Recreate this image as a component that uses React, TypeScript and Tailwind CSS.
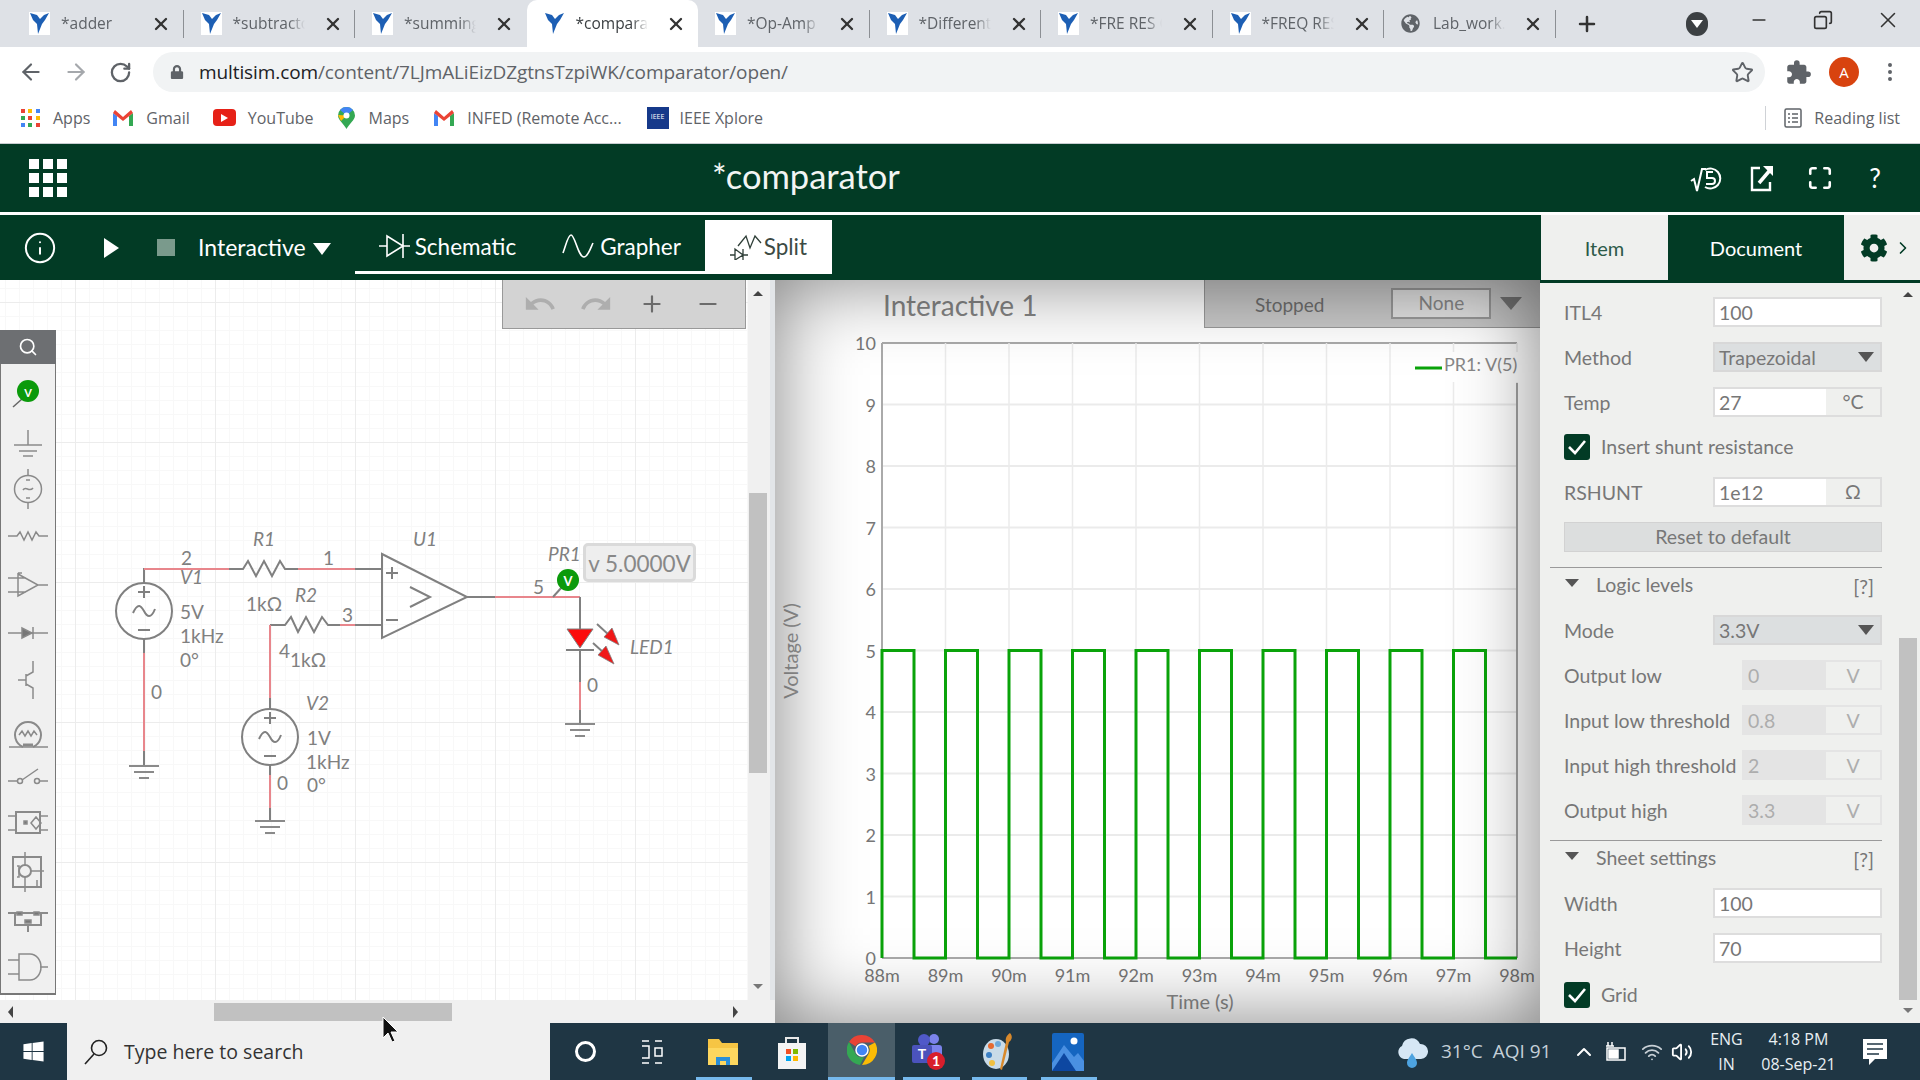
import {
  ArrowLeft,
  ArrowRight,
  ChevronRight,
  ChevronUp,
  Copy,
  EllipsisVertical,
  Info,
  Maximize,
  Minus,
  Plus,
  RotateCw,
  Search,
  Star,
  Volume2,
  Wifi,
  X,
} from 'lucide-react';
import { FaCog, FaGlobeAmericas, FaLock, FaWindows } from 'react-icons/fa';
import { MdExtension, MdRedo, MdUndo } from 'react-icons/md';

const CHROME_FONT = "font-['Open_Sans',sans-serif]";

function NiLogo() {
  return (
    <svg width="21" height="23" viewBox="0 0 21 23" className="shrink-0">
      <rect width="21" height="23" fill="#fff" />
      <path d="M1 1 L8 3 L11 7 L15 3 L20 1 L16 8 L13 12 L9 22 L8 12 L4 8 Z" fill="#1d5fb4" />
    </svg>
  );
}

function Tab({ title, active, globe, sep = true }: { title: string; active?: boolean; globe?: boolean; sep?: boolean }) {
  return (
    <div className={`w-[171.5px] h-[47px] shrink-0 flex items-center pl-[17px] ${active ? 'bg-white rounded-t-[10px]' : ''}`}>
      {globe ? <FaGlobeAmericas size={19} className="text-[#5f6368] shrink-0 mr-[2px]" /> : <NiLogo />}
      <div
        className={`w-[72px] ml-[11px] overflow-hidden whitespace-nowrap text-[15.5px] [mask-image:linear-gradient(90deg,#000_78%,transparent)] ${active ? 'text-[#3c4043]' : 'text-[#5f6368]'}`}
      >
        {title}
      </div>
      <div className="ml-[17px] w-[22px] flex justify-center">
        <X size={20} strokeWidth={2.8} className="text-[#333]" />
      </div>
      <div className={`ml-auto w-px h-[28px] ${sep ? 'bg-[#8c8f94]' : ''}`} />
    </div>
  );
}

function TabStrip() {
  return (
    <div className="h-[47px] bg-[#dee1e6] flex items-center pl-[12px] shrink-0">
      <Tab title="*adder" />
      <Tab title="*subtractor" />
      <Tab title="*summing" sep={false} />
      <Tab title="*comparator" active sep={false} />
      <Tab title="*Op-Amp I" />
      <Tab title="*Differentiator" />
      <Tab title="*FRE RES C" />
      <Tab title="*FREQ RES" />
      <Tab title="Lab_work.pdf" globe />
      <Plus size={24} strokeWidth={2.5} className="ml-[19px] text-[#333]" />
      <div className="ml-[87px] w-[22px] h-[24px] rounded-full bg-[#3c4043] flex items-center justify-center">
        <div className="w-0 h-0 border-x-[6px] border-x-transparent border-t-[8px] border-t-white" />
      </div>
      <Minus size={20} className="ml-[41px] -mt-[8px] text-[#333]" />
      <Copy size={20} className="ml-[44px] -mt-[8px] text-[#333] -scale-x-100" />
      <X size={26} strokeWidth={1.4} className="ml-[42px] -mt-[8px] text-[#333]" />
    </div>
  );
}

function AddressBar() {
  return (
    <div className="h-[47px] bg-white flex items-center shrink-0 pt-[3px]">
      <ArrowLeft size={26} className="ml-[18px] text-[#5f6368]" />
      <ArrowRight size={26} className="ml-[19px] text-[#a5a8ac]" />
      <RotateCw size={23} strokeWidth={2.4} className="ml-[20px] text-[#5f6368]" />
      <div className="ml-[21px] w-[1612px] h-[40px] rounded-full bg-[#f1f3f4] flex items-center pl-[17px] pr-[11px]">
        <FaLock size={14} className="text-[#5f6368]" />
        <span className="ml-[15px] text-[19px] tracking-[-0.1px] text-[#5f6368] whitespace-nowrap">
          <span className="text-[#202124]">multisim.com</span>/content/7LJmALiEizDZgtnsTzpiWK/comparator/open/
        </span>
        <Star size={23} className="ml-auto text-[#5f6368]" />
      </div>
      <MdExtension size={27} className="ml-[20px] text-[#5f6368]" />
      <div className="ml-[17px] w-[30px] h-[30px] rounded-full bg-[#d8430f] text-white text-[15px] flex items-center justify-center">A</div>
      <EllipsisVertical size={24} className="ml-[19px] text-[#5f6368]" />
    </div>
  );
}

function GmailIcon() {
  return (
    <svg width="20" height="16" viewBox="0 0 20 16">
      <path d="M0 3 V16 H4 V6 Z" fill="#4285f4" />
      <path d="M16 6 V16 H20 V3 Z" fill="#34a853" />
      <path d="M0 3 L2 0 L10 7 L18 0 L20 3 L10 11 Z" fill="#ea4335" />
    </svg>
  );
}

function Bookmarks() {
  const dots = ['#ea4335', '#fbbc05', '#4285f4', '#34a853', '#ea4335', '#fbbc05', '#4285f4', '#34a853', '#ea4335'];
  return (
    <div className="h-[50px] bg-white border-b border-[#c8ccd0] flex items-center shrink-0 text-[16px] text-[#5f6368] whitespace-nowrap pb-[2px]">
      <div className="ml-[21px] grid grid-cols-3 gap-[3px] w-[19px]">
        {dots.map((c, i) => (
          <div key={i} className="w-[4px] h-[4px]" style={{ background: c }} />
        ))}
      </div>
      <span className="ml-[13px]">Apps</span>
      <div className="ml-[23px]"><GmailIcon /></div>
      <span className="ml-[13px]">Gmail</span>
      <div className="ml-[23px] w-[23px] h-[17px] rounded-[4px] bg-[#e62117] flex items-center justify-center">
        <div className="w-0 h-0 border-y-[4px] border-y-transparent border-l-[7px] border-l-white" />
      </div>
      <span className="ml-[12px]">YouTube</span>
      <svg width="17" height="22" viewBox="0 0 17 22" className="ml-[24px]">
        <path d="M8.5 0 A8.5 8.5 0 0 1 17 8.5 C17 13 11 17 8.5 22 C6 17 0 13 0 8.5 A8.5 8.5 0 0 1 8.5 0 Z" fill="#34a853" />
        <path d="M2 3 A8.5 8.5 0 0 1 15 3 L8.5 8.5 Z" fill="#4285f4" />
        <path d="M0 8 L8.5 8.5 L3 14 Z" fill="#fbbc05" />
        <circle cx="8.5" cy="8.5" r="3" fill="#fff" />
      </svg>
      <span className="ml-[14px]">Maps</span>
      <div className="ml-[25px]"><GmailIcon /></div>
      <span className="ml-[13px]">INFED (Remote Acc...</span>
      <div className="ml-[25px] w-[22px] h-[22px] bg-[#16398a] text-white text-[7px] flex items-center justify-center">IEEE</div>
      <span className="ml-[11px]">IEEE Xplore</span>
      <div className="ml-auto w-px h-[24px] bg-[#cfd2d6]" />
      <svg width="18" height="20" viewBox="0 0 18 20" className="ml-[18px]" fill="none" stroke="#5f6368" strokeWidth="1.5">
        <rect x="1" y="1" width="16" height="18" rx="1.5" />
        <path d="M4 6 H6 M8 6 H14 M4 10 H6 M8 10 H14 M4 14 H6 M8 14 H14" />
      </svg>
      <span className="ml-[12px] mr-[20px]">Reading list</span>
    </div>
  );
}

function AppHeader() {
  return (
    <div className="h-[68px] bg-[#023b25] flex items-center text-white shrink-0">
      <div className="ml-[29px] grid grid-cols-3 gap-[4px]">
        {Array.from({ length: 9 }).map((_, i) => (
          <div key={i} className="w-[10px] h-[10px] bg-white" />
        ))}
      </div>
      <div className="ml-[645px] -mt-[3px] text-[34.5px] text-[#f2f5f3] leading-none">*comparator</div>
      <svg width="34" height="30" viewBox="0 0 34 30" className="ml-auto" fill="none" stroke="#fff" strokeWidth="2">
        <path d="M1 18 L4 16 L7 28 L12 6 H16" />
        <path d="M15 7 A10 10 0 1 1 15 24" />
        <path d="M23 9 H17 V15 H22 A3 3 0 0 1 22 21 H16" />
      </svg>
      <svg width="24" height="28" viewBox="0 0 24 28" className="ml-[26px]" fill="none" stroke="#fff" strokeWidth="2.4">
        <path d="M10 4 H2 V26 H20 V18" />
        <path d="M9 19 L21 5" strokeWidth="3.5" />
        <path d="M13 2 H23 V12 Z" fill="#fff" stroke="none" />
      </svg>
      <Maximize size={26} strokeWidth={2.4} className="ml-[33px]" />
      <div className="ml-[36px] mr-[39px] text-[26px]">?</div>
    </div>
  );
}

function Toolbar() {
  return (
    <div className="h-[65px] bg-[#023b25] flex text-white shrink-0">
      <div className="flex items-center">
        <Info size={34} strokeWidth={1.4} className="ml-[23px]" />
        <div className="ml-[47px] w-0 h-0 border-y-[10px] border-y-transparent border-l-[15px] border-l-white" />
        <div className="ml-[38px] w-[18px] h-[17px] bg-[#7a9a8c]" />
        <div className="ml-[23px] text-[23px] whitespace-nowrap">Interactive</div>
        <div className="ml-[7px] mt-[3px] w-0 h-0 border-x-[9px] border-x-transparent border-t-[12px] border-t-white" />
      </div>
      <div className="ml-[24px] w-[350px] h-[54px] mt-[5px] border-b-[3px] border-white flex items-center pl-[24px] pt-[3px] text-[22.5px]">
        <svg width="31" height="24" viewBox="0 0 31 24" fill="none" stroke="#fff" strokeWidth="1.6" className="-mt-[3px]">
          <path d="M0 12 H8 M8 2 V22 L24 12 Z M24 0 V24 M24 12 H31" />
        </svg>
        <span className="ml-[5px]">Schematic</span>
        <svg width="32" height="26" viewBox="0 0 32 26" fill="none" stroke="#fff" strokeWidth="1.6" className="ml-[46px] -mt-[3px]">
          <path d="M1 20 C4 12 6 2 9 2 C13 2 16 24 22 24 C26 24 29 14 31 10" />
        </svg>
        <span className="ml-[6px]">Grapher</span>
      </div>
      <div className="w-[127px] h-[54px] mt-[5px] bg-white flex items-center pl-[25px] text-[22.5px] text-[#3c4a44]">
        <svg width="32" height="26" viewBox="0 0 32 26" fill="none" stroke="#2f3f38" strokeWidth="1.3">
          <path d="M0 21 H5 M5 15 V26 L13 21 Z M13 15 V26 M13 21 H18" />
          <path d="M8 12 L16 2 L20 14 L25 2 L31 9" />
        </svg>
        <span className="ml-[2px]">Split</span>
      </div>
      <div className="ml-auto w-[380px] flex">
        <div className="w-[127px] ml-px bg-[#eff0ee] text-[#2c5a48] text-[20px] flex items-center justify-center">Item</div>
        <div className="w-[176px] text-[20px] flex items-center justify-center">Document</div>
        <div className="flex-1 bg-[#eff0ee] text-[#023b25] flex items-center pl-[16px]">
          <FaCog size={28} />
          <ChevronRight size={20} className="ml-[5px]" />
        </div>
      </div>
    </div>
  );
}

function Ground({ x, y }: { x: number; y: number }) {
  return (
    <path
      d={`M${x - 15} ${y} H${x + 15} M${x - 10} ${y + 6} H${x + 10} M${x - 5} ${y + 12} H${x + 5}`}
      stroke="#8a8a8a"
      strokeWidth="2"
      fill="none"
    />
  );
}

function AcSource({ x, y }: { x: number; y: number }) {
  return (
    <g stroke="#808080" strokeWidth="2" fill="none">
      <circle cx={x} cy={y} r="28" />
      <path d={`M${x - 6} ${y - 19} H${x + 6} M${x} ${y - 25} V${y - 13} M${x - 6} ${y + 19} H${x + 6}`} />
      <path d={`M${x - 11} ${y + 2} C${x - 6} ${y - 9} ${x - 3} ${y - 5} ${x} ${y} C${x + 3} ${y + 6} ${x + 7} ${y + 8} ${x + 11} ${y - 2}`} />
    </g>
  );
}

function Label({ x, y, children, italic }: { x: number; y: number; children: string; italic?: boolean }) {
  return (
    <text x={x} y={y - 1} fontSize="19" fill="#808080" fontStyle={italic ? 'italic' : 'normal'} dominantBaseline="central">
      {children}
    </text>
  );
}

function SchematicDrawing() {
  const gray = '#808080';
  const red = '#e8868c';
  return (
    <svg width="748" height="720" viewBox="0 280 748 720" className="block">
      <g fill="none" strokeWidth="2">
        <path d="M144 583 V569 H160" stroke={gray} />
        <path d="M144 569 H229" stroke={red} />
        <path d="M229 569 H243 L248 561 L256 576 L264 561 L272 576 L280 561 L285 569 H298" stroke={gray} />
        <path d="M298 569 H355" stroke={red} />
        <path d="M355 569 H382" stroke={gray} />
        <path d="M270 625 H285 L291 617 L298 632 L306 617 L314 632 L322 617 L328 625 H340" stroke={gray} />
        <path d="M340 625 H355" stroke={red} />
        <path d="M355 625 H382" stroke={gray} />
        <path d="M270 625 V698" stroke={red} />
        <path d="M270 698 V709 M270 765 V775" stroke={gray} />
        <path d="M270 775 V808" stroke={red} />
        <path d="M270 808 V821" stroke={gray} />
        <path d="M144 638 V653" stroke={gray} />
        <path d="M144 653 V751" stroke={red} />
        <path d="M144 751 V766" stroke={gray} />
        <path d="M382 554 L467 597 L382 638 Z" stroke={gray} />
        <path d="M386 573 H398 M392 567 V579 M386 620 H398" stroke={gray} />
        <path d="M410 587 L430 597 L410 607" stroke={gray} />
        <path d="M467 597 H495" stroke={gray} />
        <path d="M495 597 H580" stroke={red} />
        <path d="M580 597 V629 M566 650 H594 M580 650 V682 M580 710 V724" stroke={gray} />
        <path d="M580 682 V710" stroke={red} />
        <path d="M553 597 L562 587" stroke={gray} />
        <path d="M597 624 L610 636 M593 643 L604 653" stroke={gray} />
      </g>
      <Ground x={144} y={766} />
      <Ground x={270} y={821} />
      <Ground x={580} y={724} />
      <AcSource x={144} y={611} />
      <AcSource x={270} y={737} />
      <path d="M567 629 H593 L580 648 Z" fill="#fb0d0d" stroke={gray} strokeWidth="1" />
      <path d="M619 645 L604 637 L612 628 Z M614 664 L598 655 L606 646 Z" fill="#f01818" stroke={gray} strokeWidth="0.8" />
      <circle cx="568" cy="580" r="11" fill="#0b9a0b" />
      <text x="568" y="581" fontSize="13" fontWeight="700" fill="#fff" textAnchor="middle" dominantBaseline="central">V</text>
      <Label x={253} y={539} italic>R1</Label>
      <Label x={181} y={558}>2</Label>
      <Label x={180} y={577} italic>V1</Label>
      <Label x={323} y={558}>1</Label>
      <Label x={246} y={604}>1kΩ</Label>
      <Label x={295} y={595} italic>R2</Label>
      <Label x={342} y={615}>3</Label>
      <Label x={279} y={651}>4</Label>
      <Label x={290} y={660}>1kΩ</Label>
      <Label x={180} y={612}>5V</Label>
      <Label x={180} y={636}>1kHz</Label>
      <Label x={180} y={660}>0°</Label>
      <Label x={151} y={692}>0</Label>
      <Label x={306} y={703} italic>V2</Label>
      <Label x={307} y={738}>1V</Label>
      <Label x={306} y={762}>1kHz</Label>
      <Label x={307} y={785}>0°</Label>
      <Label x={277} y={783}>0</Label>
      <Label x={413} y={539} italic>U1</Label>
      <Label x={533} y={587}>5</Label>
      <Label x={548} y={554} italic>PR1</Label>
      <Label x={630} y={647} italic>LED1</Label>
      <Label x={587} y={685}>0</Label>
    </svg>
  );
}

function Pal({ children, w = 48, h = 44 }: { children: React.ReactNode; w?: number; h?: number }) {
  return (
    <svg width={w} height={h} viewBox={`${-w / 2} ${-h / 2} ${w} ${h}`} fill="none" stroke="#8a8a8a" strokeWidth="1.5">
      {children}
    </svg>
  );
}

const paletteItems = [
  {
    h: 'h-[54px]',
    icon: (
      <Pal>
        <path d="M-15 16 L-6 8" stroke="#666" />
        <circle cx="0" cy="0" r="11" fill="#0b9a0b" stroke="none" />
        <text x="0" y="1" fontSize="11" fontWeight="700" fill="#fff" stroke="none" textAnchor="middle" dominantBaseline="central">V</text>
      </Pal>
    ),
  },
  { h: 'h-[48px]', icon: <Pal><path d="M0 -12 V3 M-14 3 H14 M-9 9 H9 M-5 14 H5" /></Pal> },
  {
    h: 'h-[46px]',
    icon: (
      <Pal>
        <circle r="13.5" />
        <path d="M0 -20 V-13 M0 13 V20 M-5 1 C-2 -4 1 4 5 -1 M-2 -9 H2 M-2 9 H2" />
      </Pal>
    ),
  },
  { h: 'h-[48px]', icon: <Pal><path d="M-20 0 H-11 L-8 -4 L-4 4 L0 -4 L4 4 L8 -4 L11 0 H20" /></Pal> },
  {
    h: 'h-[50px]',
    icon: (
      <Pal>
        <path d="M-10 -11 L10 0 L-10 11 Z M-20 -7 H-2 M-20 7 H-2 M10 0 H20 M-10 -12 H-6" />
      </Pal>
    ),
  },
  {
    h: 'h-[46px]',
    icon: (
      <Pal>
        <path d="M-20 0 H20 M5 -6 V6" />
        <path d="M-6 -5 V5 L4 0 Z" fill="#777" />
      </Pal>
    ),
  },
  { h: 'h-[48px]', icon: <Pal><path d="M5 -19 V-8 L-2 -4 V4 L5 8 V19 M-2 -6 V6 M-10 0 H-2" /></Pal> },
  {
    h: 'h-[60px]',
    icon: (
      <Pal>
        <path d="M-19 13 H20" />
        <path d="M-5 13 A13 13 0 1 1 5 13" strokeWidth="2" />
        <path d="M-9 1 L-6 -3 L-3 2 L0 -3 L3 2 L6 -3 L9 1" />
        <path d="M-5 11 H5" strokeWidth="3" />
      </Pal>
    ),
  },
  {
    h: 'h-[32px]',
    icon: (
      <Pal h={28}>
        <path d="M-20 1 H-11 M-6 0 L10 -11 M11 1 H20" />
        <circle cx="-8" cy="1" r="2.5" />
        <circle cx="9" cy="1" r="2.5" />
      </Pal>
    ),
  },
  {
    h: 'h-[54px]',
    icon: (
      <Pal>
        <rect x="-12" y="-11" width="24" height="21" strokeWidth="2" />
        <path d="M-20 -7 H-12 M-20 7 H-12 M12 -7 H20 M12 7 H20 M3 0 L8 -6 L13 0 L8 6 Z" />
        <rect x="-4" y="-2" width="3" height="3" fill="#777" />
      </Pal>
    ),
  },
  {
    h: 'h-[44px]',
    icon: (
      <Pal>
        <rect x="-15" y="-15" width="28" height="30" strokeWidth="2" />
        <circle cx="-3" cy="-1" r="6" strokeWidth="2" />
        <path d="M-3 -20 V-7 M-3 5 V20 M3 -1 H16 M-11 -6 H-9 V5 H-11 M9 8 V15 M13 8 V15" />
      </Pal>
    ),
  },
  {
    h: 'h-[48px]',
    icon: (
      <Pal>
        <path d="M-20 -5 H20 M-13 -5 V7 H13 V-5 M0 7 V14" strokeWidth="2" />
        <rect x="-11" y="-6" width="5" height="3" fill="#777" />
        <rect x="6" y="-6" width="5" height="3" fill="#777" />
        <rect x="-3" y="2" width="6" height="3" fill="#777" />
      </Pal>
    ),
  },
  {
    h: 'h-[50px]',
    icon: (
      <Pal>
        <path d="M-20 -7 H-9 M-20 7 H-9 M12 0 H20 M-9 -13 H2 A11 13 0 0 1 2 13 H-9 Z" />
      </Pal>
    ),
  },
];

function Palette() {
  return (
    <div className="absolute left-0 top-[50px] w-[56px] h-[665px] flex flex-col border-x border-b-2 border-[#777] bg-[#f0f0f0]">
      <div className="h-[34px] -mx-px bg-[#6d6f72] flex items-center justify-center shrink-0">
        <Search size={20} strokeWidth={2} className="text-white" />
      </div>
      {paletteItems.map((item, i) => (
        <div key={i} className={`${item.h} flex items-center justify-center shrink-0`}>
          {item.icon}
        </div>
      ))}
    </div>
  );
}

function ArrowUp() {
  return <div className="w-0 h-0 border-x-[5px] border-x-transparent border-b-[5px] border-b-[#444]" />;
}
function ArrowDown() {
  return <div className="w-0 h-0 border-x-[5px] border-x-transparent border-t-[5px] border-t-[#777]" />;
}

function SchematicPane() {
  return (
    <div className="w-[775px] flex flex-col shrink-0 bg-[#f0f0f0]">
      <div className="h-[720px] flex">
        <div className="relative w-[748px] h-[720px] bg-white bg-[linear-gradient(#ececec_1px,transparent_1px),linear-gradient(90deg,#ececec_1px,transparent_1px),linear-gradient(#f8f8f8_1px,transparent_1px),linear-gradient(90deg,#f8f8f8_1px,transparent_1px)] bg-[size:140px_140px,140px_140px,14px_14px,14px_14px] bg-[position:0_22px,75px_0,0_8px,5px_0]">
          <SchematicDrawing />
          <Palette />
          <div className="absolute left-[502px] top-0 w-[244px] h-[49px] bg-[#d3d3d3] border border-t-0 border-[#999] flex items-center">
            <MdUndo size={34} className="ml-[20px] text-[#aeaeae]" />
            <MdRedo size={34} className="ml-[22px] text-[#aeaeae]" />
            <Plus size={26} strokeWidth={2} className="ml-[26px] text-[#6b6b6b]" />
            <Minus size={26} strokeWidth={2} className="ml-[30px] text-[#6b6b6b]" />
          </div>
          <div className="absolute left-[583px] top-[263px] w-[113px] h-[39px] rounded-[5px] border-[3px] border-[#dadada] bg-[#eeeeee] flex items-center justify-center pt-[2px] text-[22.5px] text-[#888] whitespace-nowrap">
            v 5.0000V
          </div>
        </div>
        <div className="w-[22px] flex flex-col items-center">
          <div className="mt-[11px] ml-[-2px]"><ArrowUp /></div>
          <div className="mt-[197px] ml-[-3px] w-[18px] h-[280px] bg-[#c1c1c1]" />
          <div className="mt-[211px] ml-[-2px]"><ArrowDown /></div>
        </div>
        <div className="w-[5px] bg-[#e2e5e8]" />
      </div>
      <div className="h-[23px] flex items-center relative bg-[#f0f0f0]">
        <div className="ml-[8px] w-0 h-0 border-y-[6px] border-y-transparent border-r-[5px] border-r-[#444]" />
        <div className="ml-[201px] w-[238px] h-[18px] bg-[#c1c1c1]" />
        <div className="ml-[281px] w-0 h-0 border-y-[6px] border-y-transparent border-l-[5px] border-l-[#444]" />
      </div>
    </div>
  );
}

function GraphPane() {
  const x0 = 882;
  const dx = 63.5;
  const yZero = 958;
  const dy = 61.5;
  let wave = `M${x0} ${yZero}`;
  for (let k = 0; k < 10; k++) {
    const rise = x0 + dx * k;
    const fall = rise + 32;
    wave += ` V${yZero - 5 * dy} H${fall} V${yZero} H${k === 9 ? 1517 : rise + dx}`;
  }
  const xTicks = [88, 89, 90, 91, 92, 93, 94, 95, 96, 97, 98];
  const yTicks = [0, 1, 2, 3, 4, 5, 6, 7, 8, 9, 10];
  return (
    <div className="relative w-[765px] flex flex-col bg-white shrink-0">
      <div className="h-[48px] flex items-center">
        <div className="ml-[108px] mt-[1px] text-[28px] text-[#858585]">Interactive 1</div>
        <div className="ml-auto w-[336px] h-[48px] bg-[#c8c8c8] border border-t-0 border-r-0 border-[#999] flex items-center">
          <div className="ml-[50px] mt-[3px] text-[19px] text-[#6e6e6e]">Stopped</div>
          <div className="ml-[67px] w-[100px] h-[31px] border-2 border-[#999] bg-[#e2e2e2] flex items-center justify-center text-[19px] text-[#888]">None</div>
          <div className="ml-[9px] w-0 h-0 border-x-[11px] border-x-transparent border-t-[13px] border-t-[#777]" />
        </div>
      </div>
      <svg width="765" height="695" viewBox="775 328 765 695" className="block">
        {yTicks.map((t) => (
          <path key={t} d={`M${x0} ${yZero - t * dy} H1517`} stroke={t === 0 || t === 10 ? '#aaa' : '#ebebeb'} strokeWidth="2" />
        ))}
        {xTicks.map((t, i) => (
          <path key={t} d={`M${x0 + i * dx} 343 V${yZero}`} stroke="#ebebeb" strokeWidth="1.5" />
        ))}
        <path d={`M${x0} 343 V${yZero}`} stroke="#aaa" strokeWidth="2" />
        <path d={`M1517 383 V${yZero}`} stroke="#8a8a8a" strokeWidth="1.5" />
        <rect x="1412" y="352" width="110" height="30" fill="#fff" />
        <path d={wave} fill="none" stroke="#0aa30a" strokeWidth="3" />
        {yTicks.map((t) => (
          <text key={t} x="876" y={yZero - t * dy} fontSize="18" fill="#777" textAnchor="end" dominantBaseline="central">{t}</text>
        ))}
        {xTicks.map((t, i) => (
          <text key={t} x={x0 + i * dx} y="975" fontSize="18" fill="#777" textAnchor="middle" dominantBaseline="central">{t}m</text>
        ))}
        <text x="1200" y="1001" fontSize="20" fill="#8a8a8a" textAnchor="middle" dominantBaseline="central">Time (s)</text>
        <text transform="translate(790 651) rotate(-90)" fontSize="20" fill="#999" textAnchor="middle" dominantBaseline="central">Voltage (V)</text>
        <path d="M1415 368 H1442" stroke="#0aa30a" strokeWidth="3" />
        <text x="1444" y="364" fontSize="18" fill="#888" dominantBaseline="central">PR1: V(5)</text>
      </svg>
      <div className="absolute inset-0 pointer-events-none shadow-[inset_0_0_80px_rgba(0,0,0,0.5)]" />
    </div>
  );
}

function Row({ label, children }: { label: string; children: React.ReactNode }) {
  return (
    <div className="h-[30px] flex items-center mb-[15px] shrink-0">
      <span className="whitespace-nowrap mt-[2px]">{label}</span>
      <div className="ml-auto">{children}</div>
    </div>
  );
}

function TextInput({ value }: { value: string }) {
  return <div className="w-[169px] h-[30px] bg-white border-2 border-[#ddd] pl-[4px] pt-[2px] flex items-center">{value}</div>;
}

function SelectInput({ value }: { value: string }) {
  return (
    <div className="w-[169px] h-[30px] bg-[#dcdfe0] border-2 border-[#d8d8d8] pl-[4px] flex items-center">
      <span className="mt-[2px]">{value}</span>
      <div className="ml-auto mr-[6px] w-0 h-0 border-x-[8px] border-x-transparent border-t-[10px] border-t-[#555]" />
    </div>
  );
}

function UnitInput({ value, unit }: { value: string; unit: string }) {
  return (
    <div className="w-[169px] h-[30px] border-2 border-[#ddd] flex">
      <div className="w-[111px] bg-white pl-[4px] pt-[2px] flex items-center">{value}</div>
      <div className="flex-1 flex items-center justify-center">{unit}</div>
    </div>
  );
}

function DisabledInput({ value }: { value: string }) {
  return (
    <div className="w-[140px] h-[30px] border-2 border-[#e4e4e4] flex text-[#adadad]">
      <div className="w-[82px] bg-[#e4e4e4] pl-[4px] pt-[2px] flex items-center">{value}</div>
      <div className="flex-1 flex items-center justify-center pt-[1px]">V</div>
    </div>
  );
}

function Check({ label, className }: { label: string; className: string }) {
  return (
    <div className={`h-[26px] flex items-center shrink-0 ${className}`}>
      <div className="w-[26px] h-[26px] rounded-[3px] bg-[#023b25] flex items-center justify-center">
        <svg width="20" height="18" viewBox="0 0 20 18" fill="none" stroke="#fff" strokeWidth="2.6">
          <path d="M2 9 L8 15 L18 3" />
        </svg>
      </div>
      <span className="ml-[11px]">{label}</span>
    </div>
  );
}

function Section({ title }: { title: string }) {
  return (
    <div className="-ml-[14px] h-[48px] border-t border-[#9a9a9a] flex shrink-0">
      <div className="ml-[15px] mt-[11px] w-0 h-0 border-x-[7px] border-x-transparent border-t-[8px] border-t-[#555]" />
      <span className="ml-[17px] mt-[7px]">{title}</span>
      <span className="ml-auto mr-[8px] mt-[9px]">[?]</span>
    </div>
  );
}

function SettingsPanel() {
  return (
    <div className="flex-1 bg-[#eff0ee] border-t-[3px] border-[#023b25] flex text-[19.5px] text-[#777] leading-none">
      <div className="w-[342px] pl-[24px] pt-[14px] flex flex-col">
        <Row label="ITL4"><TextInput value="100" /></Row>
        <Row label="Method"><SelectInput value="Trapezoidal" /></Row>
        <Row label="Temp"><UnitInput value="27" unit="°C" /></Row>
        <Check label="Insert shunt resistance" className="mt-[2px] mb-[17px]" />
        <Row label="RSHUNT"><UnitInput value="1e12" unit="Ω" /></Row>
        <div className="h-[30px] mb-[15px] bg-[#dcdede] border border-[#d2d2d2] flex items-center justify-center shrink-0">Reset to default</div>
        <Section title="Logic levels" />
        <Row label="Mode"><SelectInput value="3.3V" /></Row>
        <Row label="Output low"><DisabledInput value="0" /></Row>
        <Row label="Input low threshold"><DisabledInput value="0.8" /></Row>
        <Row label="Input high threshold"><DisabledInput value="2" /></Row>
        <Row label="Output high"><DisabledInput value="3.3" /></Row>
        <Section title="Sheet settings" />
        <Row label="Width"><TextInput value="100" /></Row>
        <Row label="Height"><TextInput value="70" /></Row>
        <Check label="Grid" className="mt-[4px]" />
      </div>
      <div className="ml-[17px] w-[18px] flex flex-col items-center">
        <div className="mt-[9px]"><ArrowUp /></div>
        <div className="mt-[341px] w-[18px] h-[362px] bg-[#c1c1c1]" />
        <div className="mt-[8px]"><ArrowDown /></div>
      </div>
    </div>
  );
}

function ChromeIcon() {
  return (
    <svg width="30" height="30" viewBox="0 0 30 30">
      <path d="M15 0 A15 15 0 0 1 28 7.5 H15 A7.5 7.5 0 0 0 8.5 11.3 L2 7 A15 15 0 0 1 15 0 Z" fill="#ea4335" />
      <path d="M28 7.5 A15 15 0 0 1 15 30 L21.5 19 A7.5 7.5 0 0 0 21.5 11 Z" fill="#fbbc05" />
      <path d="M2 7 L8.5 18.5 A7.5 7.5 0 0 0 17 22 L13 30 A15 15 0 0 1 2 7 Z" fill="#34a853" />
      <circle cx="15" cy="15" r="6" fill="#4285f4" stroke="#fff" strokeWidth="1.5" />
    </svg>
  );
}

function Taskbar() {
  return (
    <div className="h-[57px] bg-[#1f3644] flex items-center shrink-0 text-[#e8eef2] relative">
      <FaWindows size={23} className="ml-[22px] text-white" />
      <div className="ml-[22px] w-[483px] h-full bg-[#f0f0f0] flex items-center text-[#333] font-['Open_Sans',sans-serif] text-[19.5px]">
        <svg width="24" height="26" viewBox="0 0 24 26" className="ml-[17px]" fill="none" stroke="#222" strokeWidth="1.6">
          <circle cx="15" cy="9" r="7.5" />
          <path d="M10 15 L1 25" />
        </svg>
        <span className="ml-[16px]">Type here to search</span>
      </div>
      <div className="ml-[25px] w-[21px] h-[21px] rounded-full border-[3px] border-white" />
      <svg width="24" height="24" viewBox="0 0 24 24" className="ml-[44px]" fill="none" stroke="#fff" strokeWidth="1.5">
        <path d="M2 1 H9 M2 23 H9 M15 1 H22 M15 23 H22 M2 6 H9 V18 H2 M15 8 H22 V16 H15 Z" />
      </svg>
      <svg width="30" height="30" viewBox="0 0 30 30" className="ml-[44px]">
        <path d="M0 2 H11 L14 6 H30 V28 H0 Z" fill="#f6c544" />
        <path d="M0 11 H30 V28 H0 Z" fill="#fdd75f" />
        <path d="M8 28 V20 H22 V28 H18 V24 H12 V28 Z" fill="#2a8fd8" />
      </svg>
      <svg width="28" height="34" viewBox="0 0 28 34" className="ml-[40px]">
        <path d="M8 8 V3 H20 V8" fill="none" stroke="#e8e8e8" strokeWidth="2" />
        <rect y="8" width="28" height="26" fill="#f4f4f4" />
        <rect x="8" y="14" width="5" height="5" fill="#f25022" />
        <rect x="15" y="14" width="5" height="5" fill="#7fba00" />
        <rect x="8" y="21" width="5" height="5" fill="#00a4ef" />
        <rect x="15" y="21" width="5" height="5" fill="#ffb900" />
      </svg>
      <div className="ml-[22px] w-[67px] h-full bg-[#4a5e69] flex items-center justify-center border-b-[3px] border-[#76b9ed]">
        <ChromeIcon />
      </div>
      <svg width="36" height="38" viewBox="0 0 36 38" className="ml-[15px]">
        <circle cx="24" cy="6" r="5" fill="#7b83eb" />
        <circle cx="14" cy="7" r="6" fill="#5059c9" />
        <rect x="16" y="12" width="16" height="16" rx="3" fill="#7b83eb" />
        <rect x="2" y="12" width="20" height="18" rx="2" fill="#4b53bc" />
        <text x="12" y="26" fontSize="14" fontWeight="700" fill="#fff" textAnchor="middle">T</text>
        <circle cx="26" cy="28" r="9" fill="#d81e2c" />
        <text x="26" y="33" fontSize="14" fontWeight="700" fill="#fff" textAnchor="middle">1</text>
      </svg>
      <svg width="32" height="40" viewBox="0 0 32 40" className="ml-[36px]">
        <ellipse cx="14" cy="22" rx="13" ry="15" fill="#c9dbe8" />
        <circle cx="9" cy="14" r="3" fill="#e66a30" />
        <circle cx="16" cy="12" r="3" fill="#6ea8d8" />
        <circle cx="7" cy="23" r="3" fill="#3b7fc4" />
        <circle cx="10" cy="31" r="3" fill="#f0c040" />
        <path d="M28 1 C31 4 30 8 27 10 L20 38 L18 37 L24 10 C23 6 25 3 28 1 Z" fill="#d8892c" />
      </svg>
      <svg width="32" height="38" viewBox="0 0 32 38" className="ml-[38px]">
        <rect width="32" height="38" rx="2" fill="#1565c0" />
        <circle cx="22" cy="8" r="3.5" fill="#fff" />
        <path d="M0 30 L12 12 L22 24 L26 20 L32 28 V38 H0 Z" fill="#4a90e2" />
        <path d="M0 38 L12 20 L24 38 Z" fill="#0d47a1" />
      </svg>
      <svg width="32" height="34" viewBox="0 0 32 34" className="ml-[312px] shrink-0">
        <path d="M8 24 A7 7 0 0 1 6 11 A9.5 9.5 0 0 1 24 9 A7.5 7.5 0 0 1 25 24 Z" fill="#d6e7f5" />
        <path d="M16 18 C19 23 21 25 21 28 A5 5 0 0 1 11 28 C11 25 13 23 16 18 Z" fill="#4da3e0" />
      </svg>
      <div className="ml-[13px] text-[19px] whitespace-nowrap font-['Open_Sans',sans-serif] text-[#c4d0d8]">31°C&nbsp; AQI 91</div>
      <ChevronUp size={24} className="ml-[21px] text-white shrink-0" />
      <svg width="22" height="22" viewBox="0 0 22 22" className="ml-[8px] shrink-0" fill="none" stroke="#fff" strokeWidth="1.5">
        <rect x="3" y="7" width="18" height="12" />
        <rect x="5" y="9" width="9" height="8" fill="#fff" />
        <path d="M4 1 V5 M8 1 V5 M2 5 H10" />
      </svg>
      <Wifi size={22} className="ml-[15px] text-[#c8d0d6] shrink-0" />
      <Volume2 size={22} className="ml-[8px] text-white shrink-0" />
      <div className="ml-[15px] flex flex-col items-center text-[16px] leading-[25px] w-[36px] font-['Open_Sans',sans-serif]">
        <span>ENG</span>
        <span>IN</span>
      </div>
      <div className="ml-[14px] flex flex-col items-center text-[16px] leading-[25px] w-[80px] whitespace-nowrap font-['Open_Sans',sans-serif]">
        <span>4:18 PM</span>
        <span>08-Sep-21</span>
      </div>
      <svg width="24" height="26" viewBox="0 0 24 26" className="ml-[25px] shrink-0">
        <path d="M0 0 H24 V20 H12 L6 26 V20 H0 Z" fill="#fff" />
        <path d="M4 5 H20 M4 10 H20 M4 15 H16" stroke="#1f3644" strokeWidth="1.5" />
      </svg>
      <div className="absolute left-[696px] bottom-0 w-[56px] h-[3px] bg-[#76b9ed]" />
      <div className="absolute left-[903px] bottom-0 w-[57px] h-[3px] bg-[#76b9ed]" />
      <div className="absolute left-[972px] bottom-0 w-[55px] h-[3px] bg-[#76b9ed]" />
      <div className="absolute left-[1041px] bottom-0 w-[56px] h-[3px] bg-[#76b9ed]" />
    </div>
  );
}

export default function App() {
  return (
    <div className="relative w-[1920px] h-[1080px] overflow-hidden flex flex-col font-['Lato',sans-serif]">
      <div className={`flex flex-col ${CHROME_FONT}`}>
        <TabStrip />
        <AddressBar />
        <Bookmarks />
      </div>
      <AppHeader />
      <div className="h-[3px] bg-white shrink-0" />
      <Toolbar />
      <div className="h-[743px] flex shrink-0">
        <SchematicPane />
        <GraphPane />
        <SettingsPanel />
      </div>
      <Taskbar />
      {/* mouse pointer */}
      <svg width="20" height="28" viewBox="0 0 20 28" className="absolute left-[382px] top-[1016px]">
        <path d="M1 1 V22 L6 17 L10 26 L13 25 L9 16 L16 16 Z" fill="#111" stroke="#fff" strokeWidth="1" />
      </svg>
    </div>
  );
}
